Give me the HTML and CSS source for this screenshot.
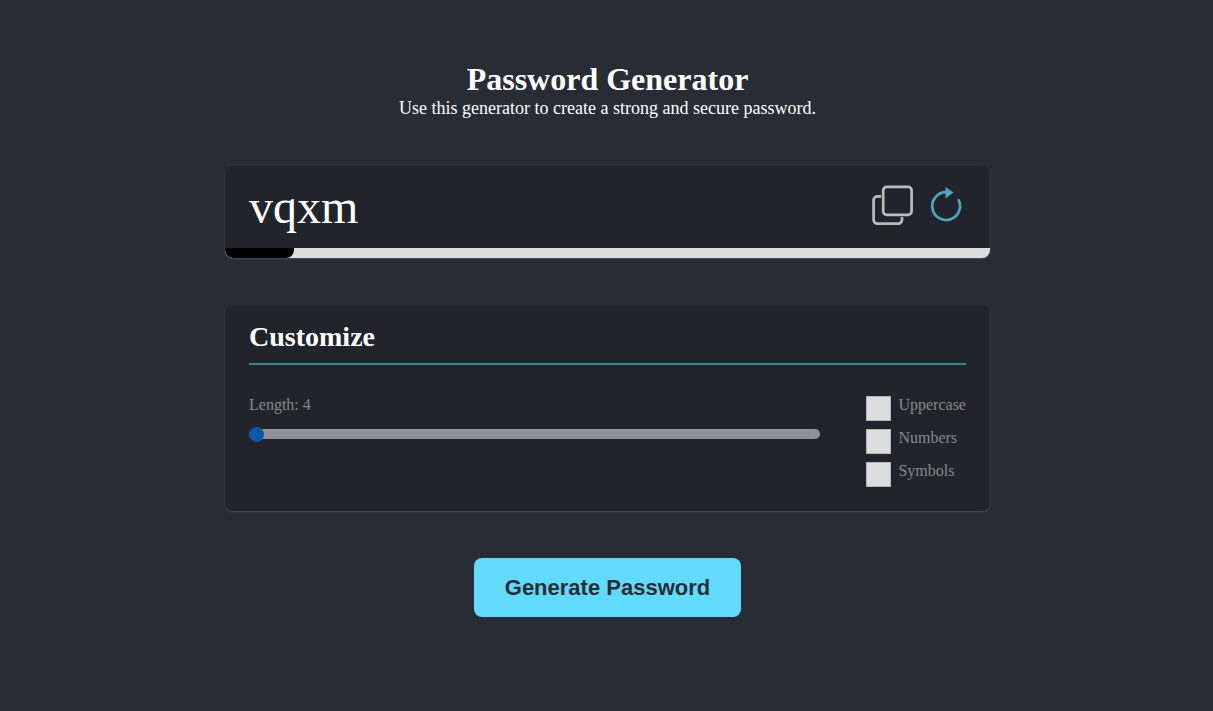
FILE: index.html
```html
<!DOCTYPE html>
<html lang="en">
<head>
<meta charset="utf-8">
<meta name="viewport" content="width=device-width, initial-scale=1">
<title>Password Generator</title>
<link rel="stylesheet" href="styles.css">
</head>
<body>
<main class="app">
  <header class="intro">
    <h1 class="title">Password Generator</h1>
    <p class="subtitle">Use this generator to create a strong and secure password.</p>
  </header>

  <section class="card">
    <div class="result">
      <output class="password">vqxm</output>
      <div class="actions">
        <button class="icon-button copy" type="button" aria-label="Copy password">
          <svg width="42" height="40" viewBox="0 0 42 40" fill="none" stroke="currentColor" stroke-width="2.7" stroke-linecap="butt">
            <rect x="11.2" y="1.8" width="28.4" height="28" rx="3.6"/>
            <path d="M9.2 11.3H5.4a3.8 3.8 0 0 0-3.8 3.8V34.800a3.800 3.800 0 0 0 3.800 3.800H26.200a3.800 3.800 0 0 0 3.800-3.800V32"/>
          </svg>
        </button>
        <button class="icon-button refresh" type="button" aria-label="New password">
          <svg width="32" height="36" viewBox="0 0 32 36" fill="none" stroke="currentColor" stroke-width="2.7">
            <path d="M17 5.200H16A13.900 13.900 0 1 0 28.700 13.200" stroke-linecap="round"/>
            <path d="M15.500 0 23.500 5.600 15.500 11.400Z" fill="currentColor" stroke="none"/>
          </svg>
        </button>
      </div>
    </div>
    <div class="strength"><div class="strength-level"></div></div>
  </section>

  <section class="card options">
    <h2 class="options-title">Customize</h2>
    <div class="controls">
      <div class="length">
        <label for="length">Length: 4</label>
        <input class="slider" id="length" type="range" min="4" max="32" value="4">
      </div>
      <div class="checks">
        <label class="check"><input class="box" type="checkbox">Uppercase</label>
        <label class="check"><input class="box" type="checkbox">Numbers</label>
        <label class="check"><input class="box" type="checkbox">Symbols</label>
      </div>
    </div>
  </section>

  <button class="generate" type="button">Generate Password</button>
</main>
</body>
</html>
```

FILE: styles.css
```css
* {
  box-sizing: border-box;
  margin: 0;
  padding: 0;
}

body {
  padding-left: 2px;
  background: #282c34;
  color: #fff;
  font-family: "Liberation Serif", "Times New Roman", serif;
}

.app {
  display: flex;
  flex-direction: column;
  align-items: center;
  width: calc(63% + 2px);
  margin: 0 auto;
  padding: 61px 0 48px;
}

.intro {
  margin-bottom: 48px;
  text-align: center;
}

.title {
  font-size: 32px;
  line-height: 37px;
}

.subtitle {
  font-size: 18px;
  line-height: 20px;
}

.card {
  width: 100%;
  margin-bottom: 47px;
  border-radius: 8px;
  background: #21242b;
  box-shadow: 0 1px 2px #4b515e;
  overflow: hidden;
}

.result {
  display: flex;
  align-items: center;
  justify-content: space-between;
  height: 82px;
  padding: 0 24px;
}

.password {
  font-size: 48px;
  line-height: 56px;
}

.actions {
  display: flex;
  align-items: center;
  gap: 16px;
  padding: 0 4px 4px 0;
}

.icon-button {
  display: block;
  border: 0;
  background: none;
  cursor: pointer;
}

.icon-button svg {
  display: block;
}

.copy {
  color: #bbbcbe;
}

.refresh {
  color: #4fa5bf;
}

.strength {
  height: 10px;
  background: #ddd;
}

.strength-level {
  width: 9%;
  height: 100%;
  border-radius: 0 0 8px 8px;
  background: #000;
}

.options {
  padding: 16px 24px 24px;
}

.options-title {
  padding-bottom: 11px;
  border-bottom: 2px solid #3e8292;
  font-size: 28px;
  line-height: 31px;
}

.controls {
  display: flex;
  justify-content: space-between;
  gap: 46px;
  padding-top: 31px;
  color: #888;
  font-size: 16px;
  line-height: 18px;
}

.length {
  flex: 1;
}

.slider {
  display: block;
  width: 100%;
  height: 10px;
  margin-top: 15px;
  border-radius: 5px;
  background: #909194;
  appearance: none;
}

.slider::-webkit-slider-thumb {
  width: 15px;
  height: 15px;
  border-radius: 50%;
  background: #0d56ae;
  appearance: none;
}

.checks {
  display: flex;
  flex-direction: column;
  gap: 8px;
}

.check {
  display: flex;
  gap: 7px;
}

.box {
  width: 25px;
  height: 25px;
  border: 1px solid #b4b5b7;
  background: #ddd;
  appearance: none;
}

.generate {
  padding: 16px 31px;
  border: 0;
  border-radius: 8px;
  background: #61dafb;
  color: #282c34;
  font-family: "Liberation Sans", Arial, sans-serif;
  font-size: 22px;
  font-weight: bold;
  line-height: 27px;
  cursor: pointer;
}
```
